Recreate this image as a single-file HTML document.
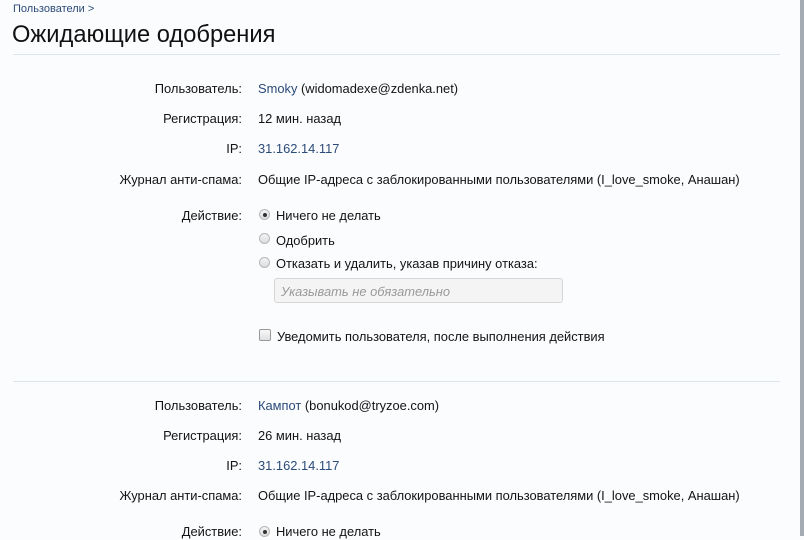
<!DOCTYPE html>
<html><head><meta charset="utf-8"><style>
body{margin:0;width:804px;height:536px;overflow:hidden;background:#fbfcfe;font-family:Tahoma,"Liberation Sans","DejaVu Sans",sans-serif;font-size:12.9px;color:#141414;position:relative}
.a{position:absolute;white-space:nowrap;line-height:16px}
.l{right:562px;text-align:right}
.v{left:258px}
.lk{color:#2b4b79}
.hr{position:absolute;left:13px;width:767px;height:1px;background:#dde6ee}
.bar{position:absolute;left:800px;top:0;width:4px;height:536px;background:#a5abb2}
.r{position:absolute;left:259px;width:11px;height:11px;border-radius:50%;border:1px solid #b8b8b8;background:linear-gradient(#f4f4f4,#dcdcdc);box-sizing:border-box}
.r.on::after{content:"";position:absolute;left:3px;top:3px;width:4px;height:4px;border-radius:50%;background:#333}
.cb{position:absolute;left:259px;width:12px;height:12px;border:1px solid #999;border-radius:2px;background:linear-gradient(#f8f8f8,#e0e0e0);box-sizing:border-box}
.in{position:absolute;left:274px;top:278px;width:289px;height:25px;border:1px solid #d6d6d6;border-radius:3px;background:#f4f4f4;box-sizing:border-box;color:#9a9a9a;font-style:italic;padding:5px 0 0 6px}
</style></head><body>
<div class="a lk" style="left:13px;top:1px;font-size:11px">Пользователи &gt;</div>
<div class="a" style="left:12px;top:21px;font-size:23.7px;line-height:28px;color:#111">Ожидающие одобрения</div>
<div class="hr" style="top:54px"></div>

<div class="a l" style="top:81px">Пользователь:</div><div class="a v" style="top:81px"><span class="lk">Smoky</span> (widomadexe@zdenka.net)</div>
<div class="a l" style="top:111px">Регистрация:</div><div class="a v" style="top:111px">12 мин. назад</div>
<div class="a l" style="top:141px">IP:</div><div class="a v lk" style="top:141px">31.162.14.117</div>
<div class="a l" style="top:172px">Журнал анти-спама:</div><div class="a v" style="top:172px">Общие IP-адреса с заблокированными пользователями (I_love_smoke, Анашан)</div>
<div class="a l" style="top:208px">Действие:</div>
<div class="r on" style="top:209px"></div><div class="a" style="left:276px;top:208px">Ничего не делать</div>
<div class="r" style="top:233px"></div><div class="a" style="left:276px;top:233px">Одобрить</div>
<div class="r" style="top:257px"></div><div class="a" style="left:276px;top:256px">Отказать и удалить, указав причину отказа:</div>
<div class="in">Указывать не обязательно</div>
<div class="cb" style="top:329px"></div><div class="a" style="left:277px;top:329px">Уведомить пользователя, после выполнения действия</div>

<div class="hr" style="top:381px"></div>

<div class="a l" style="top:398px">Пользователь:</div><div class="a v" style="top:398px"><span class="lk">Кампот</span> (bonukod@tryzoe.com)</div>
<div class="a l" style="top:428px">Регистрация:</div><div class="a v" style="top:428px">26 мин. назад</div>
<div class="a l" style="top:458px">IP:</div><div class="a v lk" style="top:458px">31.162.14.117</div>
<div class="a l" style="top:488px">Журнал анти-спама:</div><div class="a v" style="top:488px">Общие IP-адреса с заблокированными пользователями (I_love_smoke, Анашан)</div>
<div class="a l" style="top:524px">Действие:</div>
<div class="r on" style="top:526px"></div><div class="a" style="left:276px;top:524px">Ничего не делать</div>
<div class="bar"></div>
</body></html>
